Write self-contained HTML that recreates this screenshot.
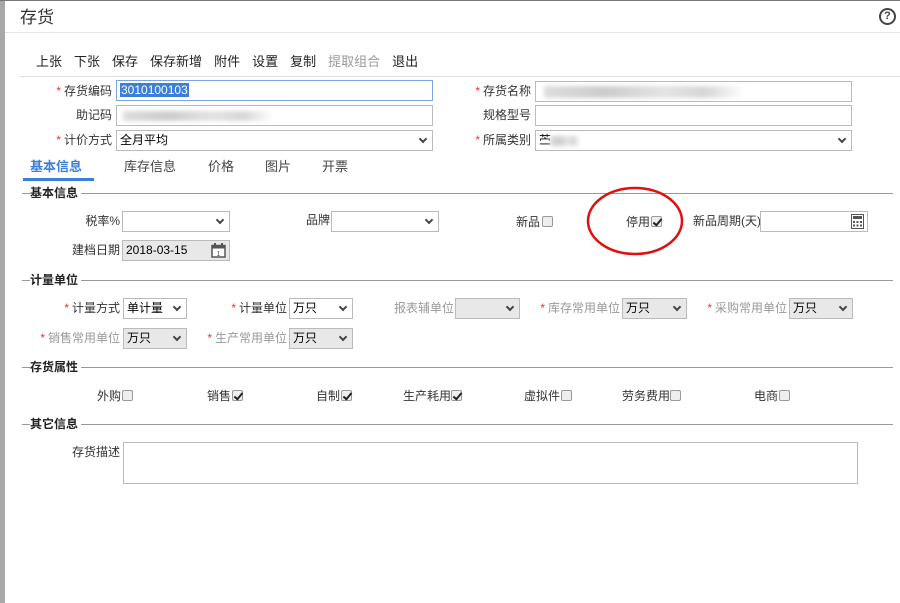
<!DOCTYPE html>
<html><head><meta charset="utf-8"><style>
*{margin:0;padding:0;box-sizing:border-box}
body{width:900px;height:603px;background:#fff;position:relative;overflow:hidden;font-family:"Liberation Sans","Noto Sans CJK SC",sans-serif;font-size:12px;color:#333}
.a{position:absolute;white-space:nowrap;line-height:14px}
.lb{position:absolute;text-align:right;font-size:12px;color:#333;line-height:14px}
.st{color:#e33;margin-right:3px}
.g{color:#999}
.in{position:absolute;border:1px solid #bbb;background:#fff;height:21px;font-size:12px;line-height:19px;padding-left:3px;color:#000}
.dis{background:#e8e8e8}
.car{position:absolute;right:6px;top:5px;width:6px;height:6px;border-right:2px solid #444;border-bottom:2px solid #444;transform:rotate(45deg)}
.cb{position:absolute;width:11px;height:11px;border:1px solid #999;border-radius:2px;background:#eee}
.cb.c::after{content:"";position:absolute;left:3px;top:0px;width:3px;height:7px;border-right:2px solid #222;border-bottom:2px solid #222;transform:rotate(40deg)}
.sec{position:absolute;left:22px;right:7px;height:1px;background:#999}
.sect{position:absolute;left:30px;background:#fff;padding:0 3px 0 0;font-weight:bold;font-size:12px;color:#222;line-height:14px}
.blur{position:absolute;background:linear-gradient(90deg,#ddd,#ccc 30%,#e4e4e4 60%,#d6d6d6 80%,#fff);filter:blur(2px)}
.tb span{margin-right:12px}
</style></head><body>
<div class="a" style="left:0;top:0;width:5px;height:603px;background:#a8a8a8"></div>
<div class="a" style="left:0;top:0;width:900px;height:1px;background:#777"></div>
<div class="a" style="left:20px;top:8px;font-size:17px;line-height:20px;color:#333">存货</div>
<div class="a" style="left:879px;top:8px;width:17px;height:17px;border:2px solid #444;border-radius:50%;font-size:11px;font-weight:bold;text-align:center;line-height:13px;color:#444">?</div>
<div class="a" style="left:5px;top:32px;width:895px;height:1px;background:#e5e5e5"></div>
<div class="a tb" style="left:36px;top:54px;font-size:13px;line-height:16px;color:#222">
<span>上张</span><span>下张</span><span>保存</span><span>保存新增</span><span>附件</span><span>设置</span><span>复制</span><span style="color:#999">提取组合</span><span style="margin:0">退出</span></div>
<div class="a" style="left:20px;top:76px;width:880px;height:1px;background:#ddd"></div>

<div class="lb" style="left:40px;width:72px;top:84px"><span class="st">*</span>存货编码</div>
<div class="in" style="left:116px;top:80px;width:317px;border-color:#7aa7e0"><span style="background:#3a7fd9;color:#fff;padding:0 1px">3010100103</span></div>
<div class="lb" style="left:40px;width:72px;top:108px">助记码</div>
<div class="in" style="left:116px;top:105px;width:317px"><div class="blur" style="left:6px;top:5px;width:150px;height:10px"></div></div>
<div class="lb" style="left:40px;width:72px;top:133px"><span class="st">*</span>计价方式</div>
<div class="in" style="left:116px;top:130px;width:317px">全月平均<i class="car"></i></div>

<div class="lb" style="left:460px;width:71px;top:84px"><span class="st">*</span>存货名称</div>
<div class="in" style="left:535px;top:81px;width:317px"><div class="blur" style="left:8px;top:4px;width:200px;height:12px"></div></div>
<div class="lb" style="left:460px;width:71px;top:108px">规格型号</div>
<div class="in" style="left:535px;top:105px;width:317px"></div>
<div class="lb" style="left:460px;width:71px;top:133px"><span class="st">*</span>所属类别</div>
<div class="in" style="left:535px;top:130px;width:317px">苎<div class="blur" style="left:14px;top:5px;width:30px;height:10px"></div><i class="car"></i></div>

<div class="a" style="left:30px;top:159px;font-size:13px;line-height:16px;color:#3a7fd9;font-weight:bold">基本信息</div>
<div class="a" style="left:23px;top:178px;width:71px;height:3px;background:#3a7fd9"></div>
<div class="a" style="left:124px;top:159px;font-size:13px;line-height:16px;color:#444">库存信息</div>
<div class="a" style="left:208px;top:159px;font-size:13px;line-height:16px;color:#444">价格</div>
<div class="a" style="left:265px;top:159px;font-size:13px;line-height:16px;color:#444">图片</div>
<div class="a" style="left:322px;top:159px;font-size:13px;line-height:16px;color:#444">开票</div>

<div class="sec" style="top:193px"></div><div class="sect" style="top:186px">基本信息</div>
<div class="lb" style="left:60px;width:60px;top:214px">税率%</div>
<div class="in" style="left:122px;top:211px;width:108px"><i class="car"></i></div>
<div class="lb" style="left:280px;width:50px;top:213px">品牌</div>
<div class="in" style="left:331px;top:211px;width:108px"><i class="car"></i></div>
<div class="a" style="left:516px;top:215px">新品</div><div class="cb" style="left:542px;top:216px"></div>
<div class="a" style="left:626px;top:215px">停用</div><div class="cb c" style="left:651px;top:216px"></div>
<div class="a" style="left:693px;top:214px">新品周期(天)</div>
<div class="in" style="left:760px;top:211px;width:108px"><svg style="position:absolute;right:3px;top:2px" width="13" height="15" viewBox="0 0 13 15"><rect x="0.5" y="0.5" width="12" height="14" fill="#fff" stroke="#555"/><rect x="2" y="2" width="9" height="3" fill="#555"/><g fill="#555"><rect x="2" y="7" width="2" height="2"/><rect x="5.5" y="7" width="2" height="2"/><rect x="9" y="7" width="2" height="2"/><rect x="2" y="10.5" width="2" height="2"/><rect x="5.5" y="10.5" width="2" height="2"/><rect x="9" y="10.5" width="2" height="2"/></g></svg></div>
<div class="lb" style="left:50px;width:70px;top:243px">建档日期</div>
<div class="in dis" style="left:122px;top:240px;width:108px">2018-03-15<svg style="position:absolute;right:3px;top:2px" width="15" height="15" viewBox="0 0 15 15"><rect x="1" y="2.5" width="13" height="11.5" fill="#fff" stroke="#555" stroke-width="1.5"/><rect x="1" y="2.5" width="13" height="3" fill="#555"/><rect x="3" y="0" width="2" height="4" fill="#555"/><rect x="10" y="0" width="2" height="4" fill="#555"/><text x="7.5" y="13" font-size="7" text-anchor="middle" fill="#555" font-family="Liberation Sans">1</text></svg></div>
<svg class="a" style="left:584px;top:186px" width="102" height="72"><ellipse cx="51" cy="35" rx="47" ry="33" fill="none" stroke="#e01010" stroke-width="2.5"/></svg>

<div class="sec" style="top:280px"></div><div class="sect" style="top:273px">计量单位</div>
<div class="lb" style="left:40px;width:80px;top:301px"><span class="st">*</span>计量方式</div>
<div class="in" style="left:123px;top:298px;width:64px">单计量<i class="car"></i></div>
<div class="lb" style="left:200px;width:87px;top:301px"><span class="st">*</span>计量单位</div>
<div class="in" style="left:289px;top:298px;width:64px">万只<i class="car"></i></div>
<div class="lb g" style="left:370px;width:84px;top:301px">报表辅单位</div>
<div class="in dis" style="left:455px;top:298px;width:65px"><i class="car"></i></div>
<div class="lb g" style="left:530px;width:90px;top:301px"><span class="st">*</span>库存常用单位</div>
<div class="in dis" style="left:622px;top:298px;width:65px">万只<i class="car"></i></div>
<div class="lb g" style="left:697px;width:90px;top:301px"><span class="st">*</span>采购常用单位</div>
<div class="in dis" style="left:789px;top:298px;width:64px">万只<i class="car"></i></div>
<div class="lb g" style="left:30px;width:90px;top:331px"><span class="st">*</span>销售常用单位</div>
<div class="in dis" style="left:123px;top:328px;width:64px">万只<i class="car"></i></div>
<div class="lb g" style="left:197px;width:90px;top:331px"><span class="st">*</span>生产常用单位</div>
<div class="in dis" style="left:289px;top:328px;width:64px">万只<i class="car"></i></div>

<div class="sec" style="top:367px"></div><div class="sect" style="top:360px">存货属性</div>
<div class="a" style="left:97px;top:389px">外购</div><div class="cb" style="left:122px;top:390px"></div>
<div class="a" style="left:207px;top:389px">销售</div><div class="cb c" style="left:232px;top:390px"></div>
<div class="a" style="left:316px;top:389px">自制</div><div class="cb c" style="left:341px;top:390px"></div>
<div class="a" style="left:403px;top:389px">生产耗用</div><div class="cb c" style="left:451px;top:390px"></div>
<div class="a" style="left:524px;top:389px">虚拟件</div><div class="cb" style="left:561px;top:390px"></div>
<div class="a" style="left:622px;top:389px">劳务费用</div><div class="cb" style="left:670px;top:390px"></div>
<div class="a" style="left:754px;top:389px">电商</div><div class="cb" style="left:779px;top:390px"></div>

<div class="sec" style="top:424px"></div><div class="sect" style="top:417px">其它信息</div>
<div class="lb" style="left:50px;width:70px;top:445px">存货描述</div>
<div class="in" style="left:123px;top:442px;width:735px;height:42px"></div>
</body></html>
